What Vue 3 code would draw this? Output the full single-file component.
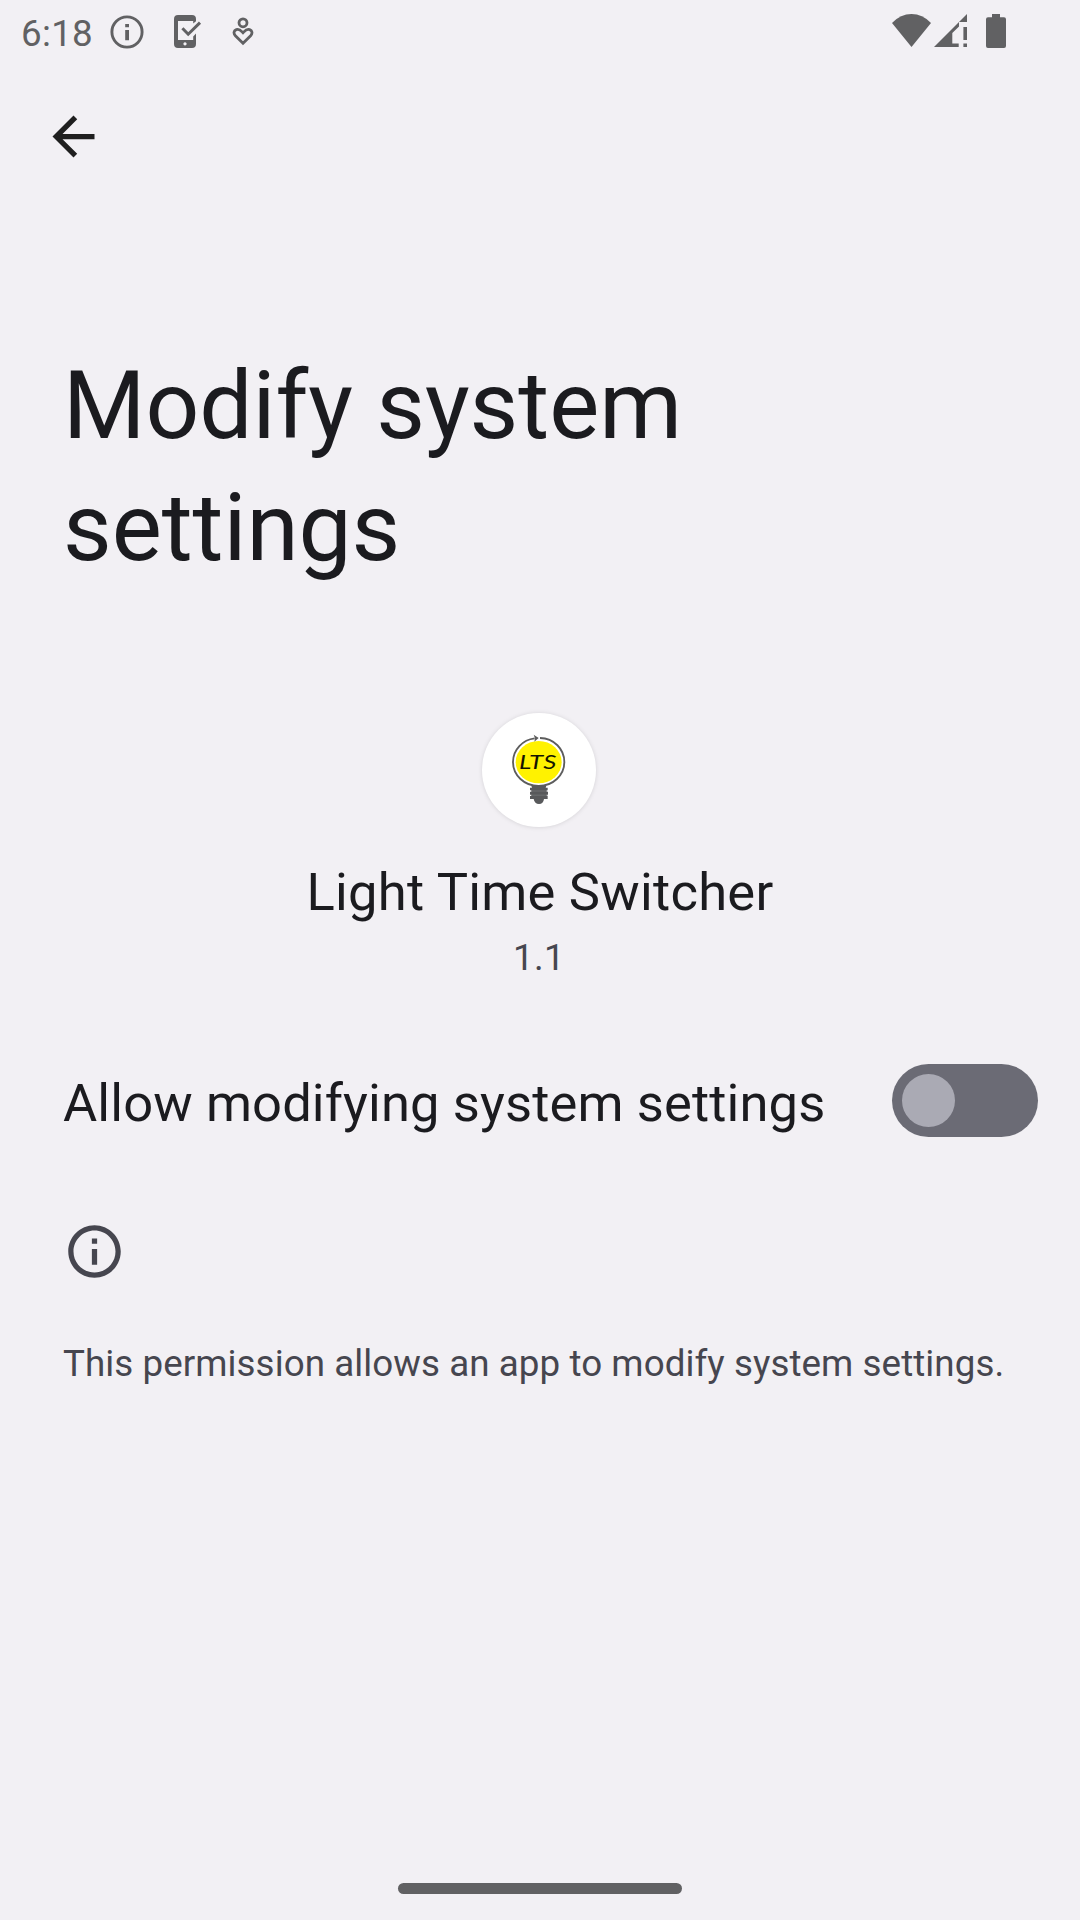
<script setup>
import { ref } from 'vue'

const allowed = ref(false)
</script>

<template>
  <div class="screen">
    <header class="status">
      <div class="status-left">
        <span class="clock">6:18</span>
        <svg class="s-info" width="34" height="34" viewBox="0 0 34 34">
          <circle cx="17" cy="17" r="15.1" fill="none" stroke="#616163" stroke-width="2.9" />
          <path d="M15.200 9h3.800v3.200h-3.800zM15.200 15h3.800v10.300h-3.800z" fill="#616163" />
        </svg>
        <svg class="s-phone" width="28" height="34" viewBox="0 0 28 34">
          <path fill="#616163" fill-rule="evenodd" d="M4 0H18Q22 0 22 4V6.2L19.2 8.6V6H4V25H19.2V21.6L22 18.5V29Q22 33 18 33H4Q0 33 0 29V4Q0 0 4 0ZM11 27.3a1.6 1.6 0 1 0 .01 0Z" />
          <path d="M8.4 13.2L14.2 19.2L26 7.6" fill="none" stroke="#616163" stroke-width="3" />
        </svg>
        <svg class="s-heart" width="22" height="30" viewBox="0 0 22 30">
          <circle cx="11" cy="5.8" r="4" fill="none" stroke="#616163" stroke-width="2.8" />
          <path d="M11 26.2L3.4 18.8C.8 16 2.2 12.6 5.6 12.4C8.2 12.3 9.2 14 11 15.8C12.8 14 13.8 12.3 16.4 12.4C19.8 12.6 21.2 16 18.6 18.8Z" fill="none" stroke="#616163" stroke-width="2.8" />
        </svg>
      </div>
      <div class="status-right">
        <svg width="39" height="33" viewBox="0 0 39 33">
          <path d="M0 9Q8.5 0 19.5 0T39 9L19.5 33Z" fill="#616163" />
        </svg>
        <svg class="s-signal" width="33" height="33" viewBox="0 0 33 33">
          <path d="M33 0V8H25V12.5L18.3 19V29.5H24.7V33H0ZM29.4 13H33V26H29.4ZM29.4 29.5H33V33H29.4Z" fill="#616163" />
        </svg>
        <svg class="s-battery" width="20" height="34" viewBox="0 0 20 34">
          <path d="M6 0H14V3.3H18Q20 3.3 20 5.3V32Q20 34 18 34H2Q0 34 0 32V5.3Q0 3.3 2 3.3H6Z" fill="#616163" />
        </svg>
      </div>
    </header>

    <nav class="toolbar">
      <svg width="63" height="63" viewBox="0 0 24 24">
        <path d="M20 11H7.83l5.59-5.59L12 4l-8 8 8 8 1.41-1.41L7.83 13H20z" fill="#1f1f1f" />
      </svg>
    </nav>

    <h1>Modify system settings</h1>

    <section class="app">
      <svg class="logo" width="140" height="140" viewBox="0 0 420 420">
        <circle class="disc" cx="207" cy="210" r="171" fill="#fff" />
        <ellipse cx="206" cy="186.5" rx="69" ry="63.5" fill="#fff200" />
        <path d="M194 115C158 119 129 149 129 186C129 226 163 258 206 258C249 258 283 226 283 186C283 147 252 115 210 114" fill="none" stroke="#5d5d5d" stroke-width="5.5" />
        <path d="M191 104L206 114L193 125L195 115Z" fill="#5d5d5d" />
        <path d="M184 257H229L227 263H233V271H230V275H234V284H230V287H233V297H222Q220 312 207 312Q194 312 191 297H180V288H184V284H180V275H184V271H180V263H186Z" fill="#58595b" />
        <path d="M183 273H232M183 285.500H232" stroke="#85868a" stroke-width="1.500" />
        <text x="147" y="207" textLength="112" lengthAdjust="spacingAndGlyphs">LTS</text>
      </svg>
      <div class="name">Light Time Switcher</div>
      <div class="version">1.1</div>
    </section>

    <section class="row">
      <span class="label">Allow modifying system settings</span>
      <button class="switch" :class="{ on: allowed }" role="switch" :aria-checked="allowed" @click="allowed = !allowed">
        <span class="thumb"></span>
      </button>
    </section>

    <section class="footer">
      <svg width="63" height="63" viewBox="0 0 24 24">
        <path d="M11 7h2v2h-2zm0 4h2v6h-2zm1-9C6.480 2 2 6.480 2 12s4.480 10 10 10 10-4.480 10-10S17.520 2 12 2zm0 18c-4.410 0-8-3.590-8-8s3.590-8 8-8 8 3.590 8 8-3.590 8-8 8z" fill="#46464f" />
      </svg>
      <p>This permission allows an app to modify system settings.</p>
    </section>

    <div class="handle"></div>
  </div>
</template>

<style>
body {
  background: #f2f0f4;
}
</style>

<style scoped>
.screen {
  box-sizing: border-box;
  width: 1080px;
  height: 1920px;
  display: flex;
  flex-direction: column;
  overflow: hidden;
  background: #f2f0f4;
  color: #1b1b1f;
  font-family: Roboto, sans-serif;
}
svg {
  display: block;
  flex: none;
}
.status {
  height: 63px;
  flex: none;
  display: flex;
  justify-content: space-between;
  padding: 0 74px 0 21px;
}
.status-left,
.status-right {
  display: flex;
  align-items: flex-start;
}
.clock {
  width: 89px;
  margin-top: 12px;
  font-size: 36.75px;
  line-height: 43px;
  letter-spacing: 0.3px;
  color: #616163;
}
.s-info {
  margin-top: 15px;
}
.s-phone {
  margin: 15px 0 0 30px;
}
.s-heart {
  margin: 17px 0 0 30px;
}
.status-right {
  padding-top: 14px;
}
.s-signal {
  margin-left: 3px;
}
.s-battery {
  margin-left: 19px;
}
.toolbar {
  height: 105px;
  flex: none;
  padding: 42px 0 0 42px;
  box-sizing: border-box;
}
h1 {
  margin: 177px 63px 0;
  font-size: 94.5px;
  line-height: 122px;
  font-weight: 400;
  letter-spacing: -0.06px;
  width: 800px;
}
.app {
  margin-top: 111px;
  display: flex;
  flex-direction: column;
  align-items: center;
}
.logo {
  overflow: visible;
}
.disc {
  filter: drop-shadow(0 1px 6px rgba(0, 0, 0, 0.12));
}
.logo text {
  font: italic 400 59px Lato, sans-serif;
  fill: #141400;
}
.name {
  margin-top: 20px;
  font-size: 52.5px;
  line-height: 64px;
  letter-spacing: 0.25px;
}
.version {
  margin-top: 12px;
  padding-right: 2px;
  font-size: 36.75px;
  line-height: 44px;
  letter-spacing: 0.35px;
  color: #46464f;
}
.row {
  margin-top: 84px;
  padding: 0 42px 0 63px;
  height: 73px;
  display: flex;
  align-items: center;
  justify-content: space-between;
}
.label {
  padding-top: 4px;
  font-size: 52.5px;
  line-height: 64px;
  letter-spacing: 0.12px;
  white-space: nowrap;
}
.switch {
  box-sizing: border-box;
  width: 146px;
  height: 73px;
  padding: 0 10px;
  border: 0;
  border-radius: 37px;
  background: #6b6b75;
  display: flex;
  align-items: center;
}
.switch.on {
  justify-content: flex-end;
}
.thumb {
  width: 53px;
  height: 53px;
  border-radius: 50%;
  background: #aaaab4;
}
.footer {
  margin-top: 83px;
  padding: 0 63px;
}
.footer p {
  margin: 59px 0 0;
  font-size: 36.75px;
  line-height: 44px;
  letter-spacing: 0.065px;
  color: #46464f;
  white-space: nowrap;
}
.handle {
  width: 284px;
  height: 11px;
  margin: auto auto 26px;
  border-radius: 6px;
  background: #616163;
}
</style>
